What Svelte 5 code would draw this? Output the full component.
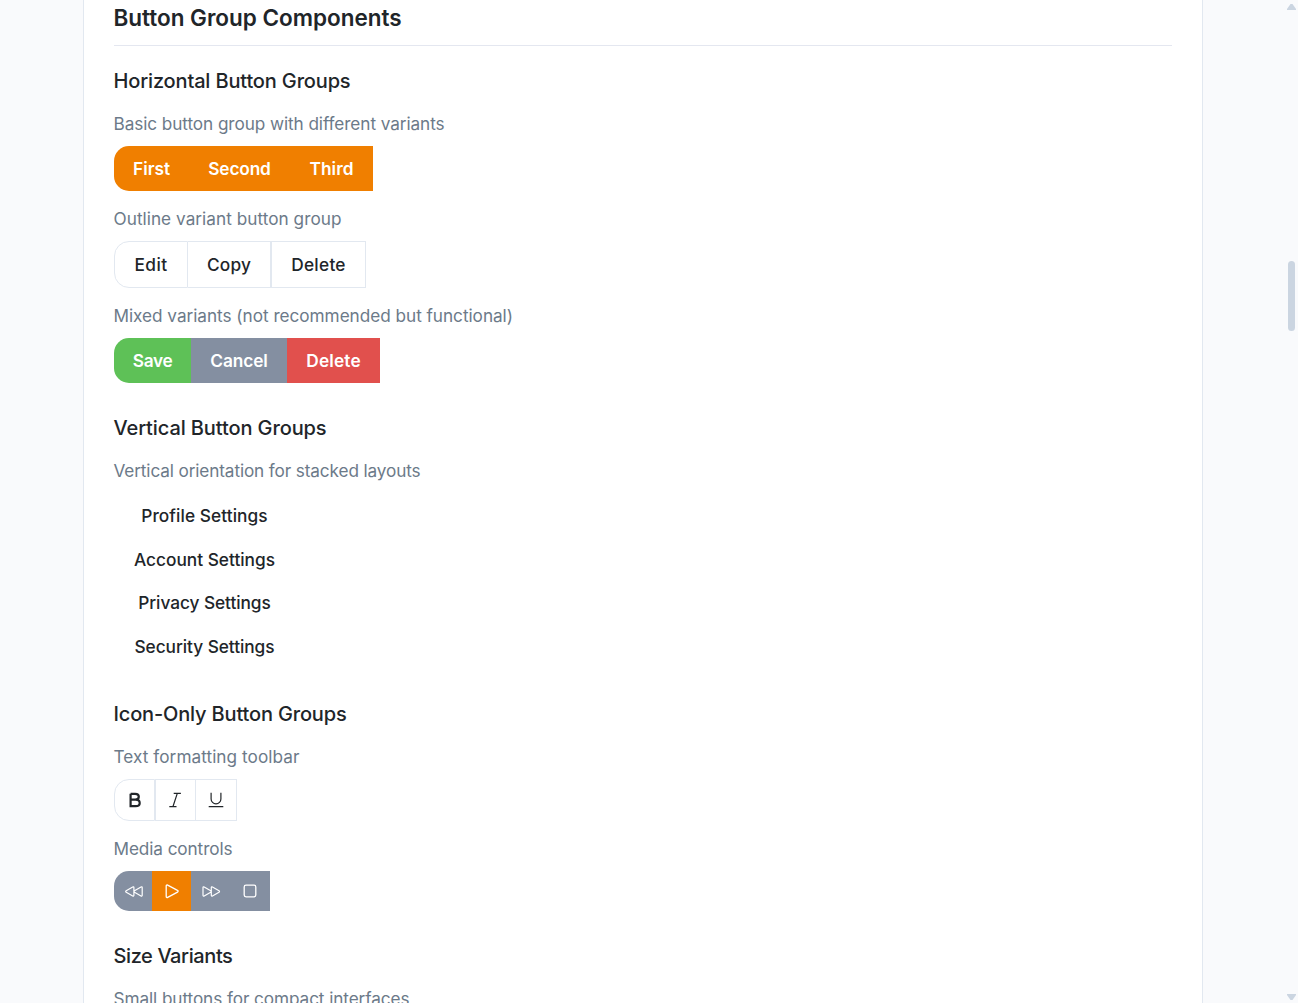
<script>
  // Tracks a label so that its glyphs span the given width in pixels.
  function fit(node, width) {
    const natural = node.getBoundingClientRect().width;
    node.style.letterSpacing = `${(width - natural) / node.textContent.length}px`;
  }

  const horizontal = [
    {
      caption: 'Basic button group with different variants', span: 331, kind: 'solid',
      buttons: [
        { label: 'First', span: 37, box: 75, tone: 'primary' },
        { label: 'Second', span: 62.5, box: 101, tone: 'primary' },
        { label: 'Third', span: 44, box: 83, tone: 'primary' }
      ]
    },
    {
      caption: 'Outline variant button group', span: 228, kind: 'outline',
      buttons: [
        { label: 'Edit', span: 33, box: 74, tone: 'plain' },
        { label: 'Copy', span: 44, box: 83, tone: 'plain' },
        { label: 'Delete', span: 54.5, box: 95, tone: 'plain wide-edge' }
      ]
    },
    {
      caption: 'Mixed variants (not recommended but functional)', span: 399.5, kind: 'solid',
      buttons: [
        { label: 'Save', span: 39.5, box: 77, tone: 'success' },
        { label: 'Cancel', span: 57.5, box: 96, tone: 'secondary' },
        { label: 'Delete', span: 54.5, box: 93, tone: 'danger' }
      ]
    }
  ];

  const vertical = [
    { label: 'Profile Settings', span: 126.5 },
    { label: 'Account Settings', span: 141 },
    { label: 'Privacy Settings', span: 132.5 },
    { label: 'Security Settings', span: 140 }
  ];
</script>

<main class="page">
  <section class="card">
    <h2><span use:fit={288}>Button Group Components</span></h2>

    <div class="block">
      <h3><span use:fit={237}>Horizontal Button Groups</span></h3>
      {#each horizontal as group}
        <p><span use:fit={group.span}>{group.caption}</span></p>
        <div class="group {group.kind}">
          {#each group.buttons as b}
            <button class={b.tone} style:width="{b.box}px"><span use:fit={b.span}>{b.label}</span></button>
          {/each}
        </div>
      {/each}
    </div>

    <div class="block">
      <h3><span use:fit={213}>Vertical Button Groups</span></h3>
      <p><span use:fit={307}>Vertical orientation for stacked layouts</span></p>
      <div class="stack">
        {#each vertical as b}
          <button class="plain"><span use:fit={b.span}>{b.label}</span></button>
        {/each}
      </div>
    </div>

    <div class="block">
      <h3><span use:fit={233}>Icon-Only Button Groups</span></h3>
      <p><span use:fit={186}>Text formatting toolbar</span></p>
      <div class="group outline tools">
        <button class="plain" aria-label="Bold">
          <svg viewBox="0 0 20 20"><path d="M5.600 3.800v12.400h5c2.600 0 4.100-1.200 4.100-3.300s-1.500-3.300-4.100-3.300h-5M5.600 3.800h4.600c2.300 0 3.600 1.100 3.600 2.900s-1.300 2.900-3.600 2.900" stroke-width="2.200" /></svg>
        </button>
        <button class="plain wide-edge" aria-label="Italic">
          <svg viewBox="0 0 20 20"><path d="M7.700 3.400h7.200M3.300 16.700h7.200M11.300 3.400L6.900 16.700" stroke-width="1.200" /></svg>
        </button>
        <button class="plain" aria-label="Underline">
          <svg viewBox="0 0 20 20"><path d="M5.100 2.800v6.100a4.900 4.900 0 0 0 9.800 0V2.800M2.700 16.700h14.600" stroke-width="1.200" /></svg>
        </button>
      </div>
      <p><span use:fit={119}>Media controls</span></p>
      <div class="group media">
        <button class="secondary" aria-label="Rewind">
          <svg viewBox="0 0 20 20"><path d="M9.900 6.600v7.600c0 .8-.5 1.100-1.200.7L2.200 11.300c-.7-.4-.7-1.200 0-1.600l6.500-3.700c.7-.4 1.200-.1 1.200.6zM18.200 6.600v7.600c0 .8-.5 1.100-1.200.7l-6.500-3.600c-.7-.4-.7-1.200 0-1.600L17 6c.7-.4 1.200-.1 1.200.6z" stroke-width="1.200" /></svg>
        </button>
        <button class="primary" aria-label="Play">
          <svg viewBox="0 0 20 20"><path d="M4.200 5v10.500c0 .9.8 1.300 1.500.9l9.800-5.300c.8-.4.8-1.300 0-1.700L5.700 4.100c-.7-.4-1.500.1-1.500.9z" stroke-width="1.300" /></svg>
        </button>
        <button class="secondary" aria-label="Fast forward">
          <svg viewBox="0 0 20 20"><path d="M10.300 6.600v7.600c0 .8.5 1.100 1.200.7l6.500-3.600c.7-.4.7-1.200 0-1.600L11.500 6c-.7-.4-1.200-.1-1.200.6zM2 6.600v7.600c0 .8.5 1.100 1.200.7l6.500-3.600c.7-.4.7-1.200 0-1.600L3.200 6C2.500 5.600 2 5.900 2 6.600z" stroke-width="1.200" /></svg>
        </button>
        <button class="secondary" aria-label="Stop">
          <svg viewBox="0 0 20 20"><rect x="4.200" y="4.200" width="11.600" height="11.600" rx="1.800" stroke-width="1.300" /></svg>
        </button>
      </div>
    </div>

    <div class="block">
      <h3><span use:fit={119}>Size Variants</span></h3>
      <p><span use:fit={296}>Small buttons for compact interfaces</span></p>
    </div>
  </section>

  <aside class="scrollbar">
    <svg class="arrow" viewBox="0 0 9 6"><path d="M3.500 0h2L9 5v1H0V5z" /></svg>
    <div class="thumb"></div>
    <svg class="arrow down" viewBox="0 0 9 6"><path d="M0 0h9v1L5.500 6h-2L0 1z" /></svg>
  </aside>
</main>

<style>
  :global(body) { background: #f9fafc; overflow: hidden; }
  .page {
    box-sizing: border-box;
    display: flex;
    justify-content: space-between;
    height: 1003px;
    padding-left: 83px;
    overflow: hidden;
    font-family: Inter, "Liberation Sans", sans-serif;
    color: #212529;
  }
  .card {
    box-sizing: border-box;
    width: 1120px;
    height: 1040px;
    padding: 0 30px;
    background: #fff;
    border: solid #e2e8f0;
    border-width: 0 1px;
  }
  h2, h3, p { margin: 0; white-space: nowrap; }
  h2 span, h3 span, p span { margin-left: -0.5px; }
  h2 {
    box-sizing: border-box;
    height: 46px;
    padding-top: 3px;
    border-bottom: 1px solid #e4e7f0;
    font-size: 22.500px;
    font-weight: 600;
    line-height: 30px;
  }
  .block { padding-bottom: 30px; }
  h2 + .block { padding-top: 20px; }
  h3 { font-size: 20px; font-weight: 500; line-height: 30px; }
  p { margin: 14px 0 8px; font-size: 17.200px; line-height: 28px; color: #6c7a89; }
  button {
    box-sizing: border-box;
    display: flex;
    align-items: center;
    justify-content: center;
    padding: 0;
    border: 0;
    background: none;
    font: 500 17.300px Inter, "Liberation Sans", sans-serif;
    color: #fff;
    white-space: nowrap;
  }
  .group { display: flex; width: max-content; }
  .group button { height: 45px; }
  .group button:first-child { border-radius: 15px 0 0 15px; }
  .solid span { font-weight: 600; }
  .primary { background: #f07f00; }
  .secondary { background: #848fa1; }
  .success { background: #5ec157; }
  .danger { background: #e1504d; }
  .plain { color: #212529; }
  .group.outline button {
    height: 47px;
    background: #fff;
    border: 1px solid #e2e8f0;
    border-left-width: 0;
  }
  .group.outline button:first-child, .group.outline .wide-edge { border-left-width: 1px; }
  .stack { display: flex; flex-direction: column; width: 181px; height: 175px; padding-top: 1px; }
  .stack button { flex: 0 0 43.600px; }
  .group.tools button { width: 41px; height: 42px; }
  .group.media button { width: 39px; height: 40px; }
  .group.media button:first-child { width: 38px; padding-left: 1px; }
  .group.media button:nth-child(3) { width: 40px; }
  .group.media button:last-child { padding-right: 1px; }
  svg { width: 20px; height: 20px; fill: none; stroke: currentColor; }
  .scrollbar {
    display: flex;
    flex-direction: column;
    align-items: center;
    box-sizing: border-box;
    width: 14px;
    height: 1003px;
    padding: 4px 0 3px;
  }
  .arrow { width: 9px; height: 6px; fill: #cbd5e1; stroke: none; }
  .thumb { width: 7px; height: 70px; margin-top: 251px; border-radius: 4px; background: #cbd5e1; }
  .down { margin-top: auto; }
</style>
